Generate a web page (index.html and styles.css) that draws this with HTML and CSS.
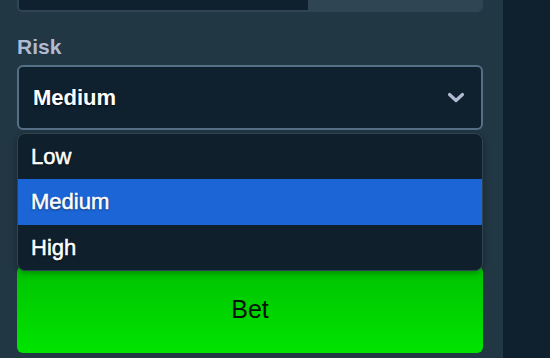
FILE: index.html
```html
<!DOCTYPE html>
<html lang="en">
<head>
<meta charset="utf-8">
<title>Risk</title>
<link rel="stylesheet" href="styles.css">
</head>
<body>
<div class="layout">
  <aside class="sidebar">
    <div class="stack">
      <div class="amount">
        <div class="amount-input"></div>
        <div class="amount-addon"></div>
      </div>
      <div class="field field-risk">
        <label class="label">Risk</label>
        <div class="select">
          <span class="select-value">Medium</span>
          <svg class="chevron" width="18" height="12" viewBox="0 0 18 12"><path d="M2.5 2.5 L9 8.5 L15.5 2.5" fill="none" stroke="#b1bad3" stroke-width="3.2" stroke-linecap="round" stroke-linejoin="round"/></svg>
        </div>
        <ul class="menu">
          <li class="option">Low</li>
          <li class="option active">Medium</li>
          <li class="option">High</li>
        </ul>
      </div>
      <div class="field covered" aria-hidden="true">
        <div class="label"></div>
        <div class="select"></div>
      </div>
      <button class="bet">Bet</button>
    </div>
  </aside>
  <main class="stage"></main>
</div>
</body>
</html>
```
FILE: styles.css
```css
html, body {
  margin: 0;
  padding: 0;
  height: 100%;
  overflow: hidden;
}
body {
  font-family: "Liberation Sans", Arial, sans-serif;
  background: #0f212e;
}
.layout {
  display: flex;
  height: 358px;
}
.sidebar {
  width: 503px;
  flex: none;
  background: #213743;
  padding: 0 20px 0 17px;
  box-sizing: border-box;
}
.stack {
  display: flex;
  flex-direction: column;
  gap: 18px;
  margin-top: -40px;
}
.amount {
  display: flex;
  height: 52px;
  border: 2px solid #2f4553;
  border-radius: 5px;
  box-sizing: border-box;
  overflow: hidden;
}
.amount-input {
  width: 289px;
  background: #0f212e;
}
.amount-addon {
  flex: 1;
  background: #2f4553;
}
.field {
  position: relative;
  display: flex;
  flex-direction: column;
  gap: 2px;
}
.label {
  height: 33px;
  line-height: 33px;
  color: #b1bad3;
  font-weight: bold;
  font-size: 21px;
}
.select {
  height: 65px;
  box-sizing: border-box;
  border: 2px solid #557086;
  border-radius: 6px;
  background: #0f212e;
  display: flex;
  align-items: center;
  justify-content: space-between;
  padding: 0 16px 0 14px;
  color: #fff;
  font-weight: bold;
  font-size: 22px;
  text-shadow: 0 1px 2px rgba(0,0,0,0.6);
}
.chevron {
  display: block;
}
.menu {
  position: absolute;
  left: 0;
  right: 0;
  top: 103px;
  margin: 0;
  padding: 0;
  list-style: none;
  background: #0f1f2c;
  border: 1px solid #2f4553;
  border-radius: 8px;
  overflow: hidden;
  z-index: 2;
  box-shadow: 0 2px 6px rgba(0,0,0,0.3);
}
.option {
  height: 45px;
  line-height: 45px;
  padding-left: 13px;
  color: #fff;
  font-size: 22px;
  text-shadow: 0 1px 2px rgba(0,0,0,0.7);
  -webkit-text-stroke: 0.5px #fff;
}
.option.active {
  background: #1b65d6;
  height: 46px;
  line-height: 46px;
}
.bet {
  height: 87px;
  border: none;
  border-radius: 6px;
  background: linear-gradient(#00c200, #00e400);
  color: #04140a;
  font-family: "Liberation Sans", Arial, sans-serif;
  font-size: 25px;
  padding: 0;
  width: 100%;
  display: flex;
  align-items: center;
  justify-content: center;
}
.stage {
  flex: 1;
  background: #0f212e;
}
```
